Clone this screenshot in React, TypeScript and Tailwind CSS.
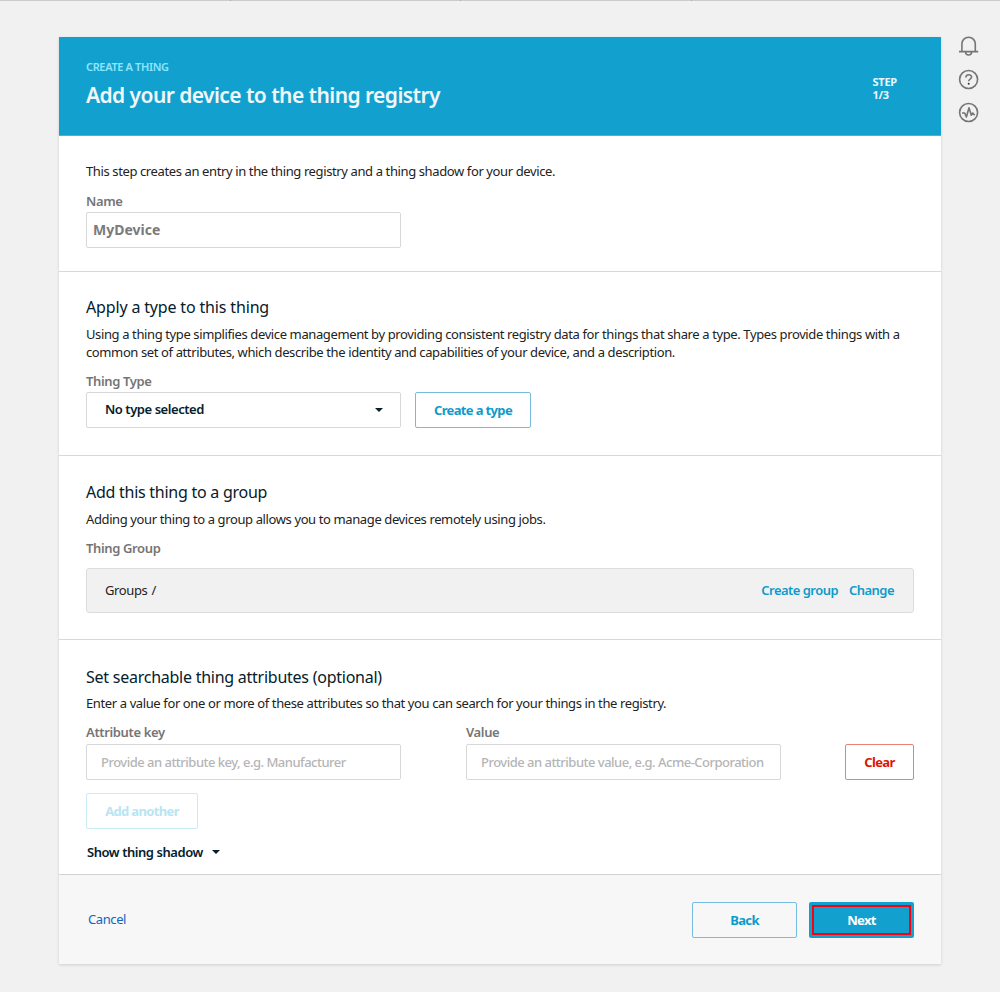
import type { ReactNode } from "react";

function Caret() {
  return (
    <svg width="8" height="4" viewBox="0 0 8 4" className="block shrink-0">
      <path d="M0 0H8L4 4Z" fill="#05202c" />
    </svg>
  );
}

function Heading({ children, className = "" }: { children: ReactNode; className?: string }) {
  return <h2 className={`text-[16px] leading-[22px] font-normal text-[#05202c] whitespace-nowrap ${className}`}>{children}</h2>;
}

function Label({ children, className = "" }: { children: ReactNode; className?: string }) {
  return (
    <div className={`text-[13px] leading-[18px] font-semibold tracking-[-0.36px] text-[#757575] whitespace-nowrap ${className}`}>
      {children}
    </div>
  );
}

function Copy({ children, className = "" }: { children: ReactNode; className?: string }) {
  return <p className={`text-[13px] leading-[18px] tracking-[-0.385px] text-[#222222] whitespace-nowrap ${className}`}>{children}</p>;
}

function Button({ children, className = "" }: { children: ReactNode; className?: string }) {
  return (
    <button
      className={`flex h-9 items-center justify-center rounded-[2px] border text-[13px] leading-[18px] font-bold tracking-[-0.65px] whitespace-nowrap ${className}`}
    >
      {children}
    </button>
  );
}

function SideIcons() {
  return (
    <div className="flex flex-col gap-[12.4px] pt-[34.5px] pl-[17px]">
      <svg width="21" height="21" viewBox="0 0 21 21" fill="none" stroke="#757575" strokeWidth="1.6">
        <path d="M3.9 15.6V7.9a6.7 6.7 0 0 1 13.4 0v7.7M1 15.6h19.2M7.6 16a3 3 0 0 0 6 0" />
      </svg>
      <svg width="21" height="21" viewBox="0 0 21 21" fill="none" stroke="#757575" strokeWidth="1.6">
        <circle cx="10.6" cy="10.5" r="9" />
        <path d="M7.9 8.4c0-3.5 5.7-3.4 5.7-.3 0 2-3 2-3 4.2" />
        <circle cx="10.7" cy="14.8" r="1" fill="#333333" stroke="none" />
      </svg>
      <svg width="21" height="21" viewBox="0 0 21 21" fill="none" stroke="#757575" strokeWidth="1.6">
        <circle cx="10.6" cy="10.5" r="9" />
        <path d="M4 11h2.7l1.7 4 2.6-9.2 2.3 7.4 1.4-2.2 2 2.3" strokeLinejoin="round" />
      </svg>
    </div>
  );
}

export default function App() {
  return (
    <div className="flex h-[992px] w-[1000px] flex-col overflow-hidden bg-[#f1f1f1] font-['Noto_Sans','Open_Sans',sans-serif]">
      <div className="flex h-px shrink-0 bg-[#cccccc]">
        <div className="w-[231px] border-r border-[#aaaaaa]" />
        <div className="w-[230px] border-r border-[#aaaaaa]" />
        <div className="w-[231px] border-r border-[#aaaaaa]" />
      </div>
      <div className="flex">
        <main className="mt-9 ml-[59px] w-[882px] shrink-0 bg-white shadow-[0_1px_3px_rgba(0,0,0,0.14)]">
          <header className="flex h-[99px] justify-between border-b border-[#45b4d9] bg-[#12a1cf] pr-11 pl-[27px]">
            <div>
              <div className="mt-[22px] text-[11px] leading-[16px] font-semibold tracking-[-0.36px] text-[#8ce6ff]">CREATE A THING</div>
              <h1 className="mt-1 text-[21px] leading-8 font-semibold tracking-[-0.57px] whitespace-nowrap text-[#f1f6f8]">
                Add your device to the thing registry
              </h1>
            </div>
            <div className="mt-[38px] text-[11px] leading-[13px] font-bold tracking-[-0.2px] text-[#e9f7fc]">
              STEP
              <br />
              1/3
            </div>
          </header>

          <section className="h-[136px] border-b border-[#d8d8d8] px-[27px] pt-[26px]">
            <Copy>This step creates an entry in the thing registry and a thing shadow for your device.</Copy>
            <Label className="mt-[12px]">Name</Label>
            <div className="mt-[2px] flex h-9 w-[315px] items-center rounded-[2px] border border-[#d8d8d8] px-1.5 text-[14px] leading-[18px] font-bold text-[#7b7b7b]">
              MyDevice
            </div>
          </section>

          <section className="h-[184px] border-b border-[#d8d8d8] px-[27px] pt-6">
            <Heading className="tracking-[-0.16px]">Apply a type to this thing</Heading>
            <Copy className="mt-[7px]">
              Using a thing type simplifies device management by providing consistent registry data for things that share a type. Types provide things with a
              <br />
              common set of attributes, which describe the identity and capabilities of your device, and a description.
            </Copy>
            <Label className="mt-[11px]">Thing Type</Label>
            <div className="mt-[2px] flex gap-[14px]">
              <div className="flex h-9 w-[315px] items-center justify-between rounded-[2px] border border-[#d8d8d8] pr-[17px] pl-[18px] text-[13px] leading-[18px] font-semibold tracking-[-0.45px] text-[#05202c]">
                <span className="pb-0.5">No type selected</span>
                <Caret />
              </div>
              <Button className="w-[116px] border-[#76bcdf] text-[#0d9bcb]">Create a type</Button>
            </div>
          </section>

          <section className="h-[184px] border-b border-[#d8d8d8] px-[27px] pt-[25px]">
            <Heading className="tracking-[-0.26px]">Add this thing to a group</Heading>
            <Copy className="mt-[7px] tracking-[-0.41px]">Adding your thing to a group allows you to manage devices remotely using jobs.</Copy>
            <Label className="mt-[11px]">Thing Group</Label>
            <div className="mt-[11px] flex h-[45px] items-center justify-between rounded-[3px] border border-[#dddddd] bg-[#f1f1f1] pr-[19px] pb-px pl-[18px]">
              <Copy className="[word-spacing:1px]">Groups /</Copy>
              <div className="flex gap-[11px] text-[13px] leading-[18px] font-semibold tracking-[-0.54px] text-[#0d9bcb]">
                <span>Create group</span>
                <span>Change</span>
              </div>
            </div>
          </section>

          <section className="h-[235px] border-b border-[#d2d2d2] px-[27px] pt-[26px]">
            <Heading className="tracking-[-0.25px]">Set searchable thing attributes (optional)</Heading>
            <Copy className="mt-[6px]">Enter a value for one or more of these attributes so that you can search for your things in the registry.</Copy>
            <div className="mt-[11px] flex items-end">
              <div className="w-[315px]">
                <Label>Attribute key</Label>
                <div className="mt-[3px] flex h-9 items-center rounded-[2px] border border-[#d8d8d8] px-[14px] text-[13px] leading-[18px] font-medium tracking-[-0.51px] whitespace-nowrap text-[#b5b5b5]">
                  Provide an attribute key, e.g. Manufacturer
                </div>
              </div>
              <div className="ml-[65px] w-[315px]">
                <Label>Value</Label>
                <div className="mt-[3px] flex h-9 items-center rounded-[2px] border border-[#d8d8d8] px-[14px] text-[13px] leading-[18px] font-medium tracking-[-0.51px] whitespace-nowrap text-[#b5b5b5]">
                  Provide an attribute value, e.g. Acme-Corporation
                </div>
              </div>
              <Button className="ml-auto w-[69px] border-[#eb8074] text-[#df1400]">Clear</Button>
            </div>
            <Button className="mt-[13px] w-[112px] border-[#c9ecf7] text-[#b8e5f3]">Add another</Button>
            <div className="mt-[14px] ml-px flex items-center gap-[9px] text-[13px] leading-[18px] font-semibold tracking-[-0.45px] text-[#05202c]">
              <span>Show thing shadow</span>
              <Caret />
            </div>
          </section>

          <footer className="flex h-[89px] items-center justify-between bg-[#f7f7f7] pr-[27px] pl-[29px]">
            <a className="pb-0.5 text-[13px] leading-[18px] tracking-[-0.4px] text-[#1166bb]">Cancel</a>
            <div className="flex gap-3">
              <Button className="w-[105px] border-[#76bcdf] text-[#0d9bcb]">Back</Button>
              <div className="flex h-9 w-[105px] rounded-[2px] bg-[#12a1cf] p-[3px]">
                <button className="flex flex-1 items-center justify-center border-2 border-[#fb0010] text-[13px] leading-[18px] font-bold tracking-[-0.65px] text-white">
                  Next
                </button>
              </div>
            </div>
          </footer>
        </main>
        <SideIcons />
      </div>
    </div>
  );
}
